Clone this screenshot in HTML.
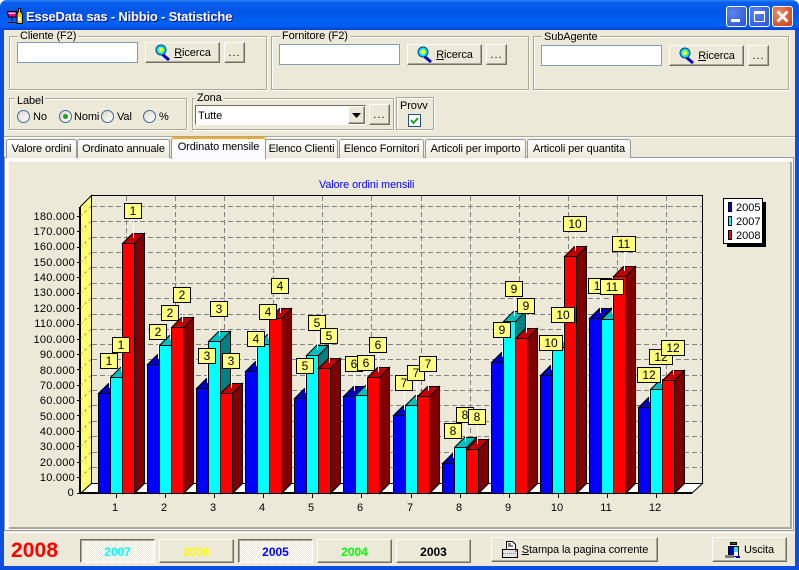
<!DOCTYPE html>
<html><head><meta charset="utf-8"><title>Statistiche</title>
<style>
html,body{margin:0;padding:0;background:#fff}
#w{position:relative;width:799px;height:570px;overflow:hidden;font:11px/14px "Liberation Sans",sans-serif;letter-spacing:-.1px;color:#000;background:#0a4fe0;border-radius:7px 7px 0 0}
#w div,#w span.a{position:absolute;box-sizing:border-box}
.tb{left:0;top:0;width:799px;height:30px;background:linear-gradient(180deg,#2b86f5 0,#0a5fee 8%,#0055e5 40%,#0062f5 80%,#0058ee 90%,#003dd0 100%)}
#w .tt{left:26px;top:9px;color:#fff;font:bold 13px/16px "Liberation Sans",sans-serif;letter-spacing:-.2px;text-shadow:1px 1px #0f1089;white-space:nowrap}
.cl{left:4px;top:30px;width:791px;height:536px;background:#ece9d8}
.gb{border:1px solid #aca899;box-shadow:1px 1px 0 #fff,inset 1px 1px 0 #fff}
.lg{background:#ece9d8;padding:0 2px;white-space:nowrap;line-height:12px}
.in{background:#fff;border:1px solid #7f9db9}
.bt{background:#ece9d8;border:1px solid;border-color:#fff #716f64 #716f64 #fff;box-shadow:inset -1px -1px 0 #aca899;text-align:center;white-space:nowrap}
.dt{letter-spacing:1px;line-height:20px}
.ri{padding-left:20px;line-height:20px}
.t{white-space:nowrap}
.rd{width:13px;height:13px;border-radius:50%;border:1px solid #3c6a94;background:linear-gradient(135deg,#dcd9cf,#fff)}
.tab{height:19px;top:139px;background:#ece9d8;border:1px solid #919b9c;border-bottom:0;border-radius:3px 3px 0 0;text-align:center;line-height:18px;white-space:nowrap;background:linear-gradient(#fff,#ece9d8)}
#w .yb{top:539px;width:75px;height:24px;font:bold 12px/25px "Liberation Sans",sans-serif;letter-spacing:0;text-align:center}
.ck{background:repeating-conic-gradient(#fff 0 25%,#ece9d8 0 50%) 0 0/2px 2px;border:1px solid;border-color:#716f64 #fff #fff #716f64;box-shadow:inset 1px 1px 0 #aca899}
svg{position:absolute;left:0;top:0}
svg text{font-family:"Liberation Sans",sans-serif;letter-spacing:0}
.lb rect{fill:#ffff80;stroke:#000}
.lb text{font-size:12px;text-anchor:middle}
.ya text{font-size:11px;text-anchor:end;letter-spacing:.25px}
.xa text{font-size:11px;text-anchor:middle}
</style></head><body>
<div id="w">
<div class="tb"></div>
<svg width="20" height="20" style="left:5px;top:7px" viewBox="0 0 20 20">
<path d="M2.500 4.500h9l-1 5.500h-7z" fill="#ff0080" stroke="#000"/><path d="M3.500 5.500h7v1.500h-7z" fill="#ffc0e0"/><path d="M7 10v4" stroke="#000"/><path d="M3 15.500h8" stroke="#000"/><path d="M3 16v2M11 16v2" stroke="#4040a0"/>
<path d="M13.500 1.500h2v3l2 2.500v9.500h-5.500V7l1.500-2.500z" fill="#e8d020" stroke="#000"/><path d="M13 10h3v4h-3z" fill="#fff8a0"/>
</svg>
<div class="tt">EsseData sas - Nibbio - Statistiche</div>
<!-- window buttons -->
<div style="left:726px;top:6px;width:21px;height:21px;border:1px solid #fff;border-radius:3px;background:radial-gradient(circle at 30% 30%,#5a85ea,#2a50d8)"></div>
<div style="left:731px;top:19px;width:9px;height:3px;background:#fff"></div>
<div style="left:749px;top:6px;width:21px;height:21px;border:1px solid #fff;border-radius:3px;background:radial-gradient(circle at 30% 30%,#5a85ea,#2a50d8)"></div>
<div style="left:754px;top:11px;width:11px;height:11px;border:1px solid #fff;border-top-width:3px"></div>
<div style="left:772px;top:6px;width:21px;height:21px;border:1px solid #fff;border-radius:3px;background:radial-gradient(circle at 30% 30%,#ec8a68,#cc3a14)"></div>
<svg width="21" height="21" style="left:772px;top:6px"><path d="M5.500 5.500l10 10M15.500 5.500l-10 10" stroke="#fff" stroke-width="2.800" fill="none"/></svg>
<div class="cl"></div>

<!-- group boxes -->
<div class="gb" style="left:9px;top:36px;width:258px;height:54px"></div>
<div class="lg t" style="left:18px;top:30px">Cliente (F2)</div>
<div class="in" style="left:17px;top:42px;width:121px;height:21px"></div>
<div class="bt ri" style="left:145px;top:42px;width:75px;height:21px"><u>R</u>icerca</div>
<svg width="18" height="18" style="left:154px;top:44px"><path d="M8 10l7 6" stroke="#0000c0" stroke-width="3"/><circle cx="7" cy="6" r="5" fill="#00e0ff" stroke="#004080"/><circle cx="7" cy="6" r="2.500" fill="#ffff00"/></svg>
<div class="bt dt" style="left:224px;top:42px;width:21px;height:21px">...</div>

<div class="gb" style="left:271px;top:36px;width:258px;height:54px"></div>
<div class="lg t" style="left:280px;top:30px">Fornitore (F2)</div>
<div class="in" style="left:279px;top:44px;width:121px;height:21px"></div>
<div class="bt ri" style="left:407px;top:44px;width:75px;height:21px"><u>R</u>icerca</div>
<svg width="18" height="18" style="left:416px;top:46px"><path d="M8 10l7 6" stroke="#0000c0" stroke-width="3"/><circle cx="7" cy="6" r="5" fill="#00e0ff" stroke="#004080"/><circle cx="7" cy="6" r="2.500" fill="#ffff00"/></svg>
<div class="bt dt" style="left:486px;top:44px;width:21px;height:21px">...</div>

<div class="gb" style="left:533px;top:36px;width:256px;height:54px"></div>
<div class="lg t" style="left:542px;top:31px">SubAgente</div>
<div class="in" style="left:541px;top:45px;width:121px;height:21px"></div>
<div class="bt ri" style="left:669px;top:45px;width:75px;height:21px"><u>R</u>icerca</div>
<svg width="18" height="18" style="left:678px;top:47px"><path d="M8 10l7 6" stroke="#0000c0" stroke-width="3"/><circle cx="7" cy="6" r="5" fill="#00e0ff" stroke="#004080"/><circle cx="7" cy="6" r="2.500" fill="#ffff00"/></svg>
<div class="bt dt" style="left:748px;top:45px;width:21px;height:21px">...</div>

<div class="gb" style="left:9px;top:98px;width:178px;height:32px"></div>
<div class="lg t" style="left:15px;top:95px">Label</div>
<div class="rd" style="left:17px;top:110px"></div><div class="t" style="left:33px;top:110px">No</div>
<div class="rd" style="left:59px;top:110px"></div><div style="left:63px;top:114px;width:5px;height:5px;border-radius:50%;background:#21a121"></div><div class="t" style="left:74px;top:110px">Nomi</div>
<div class="rd" style="left:101px;top:110px"></div><div class="t" style="left:117px;top:110px">Val</div>
<div class="rd" style="left:143px;top:110px"></div><div class="t" style="left:159px;top:110px">%</div>

<div class="gb" style="left:192px;top:98px;width:202px;height:32px"></div>
<div class="lg t" style="left:195px;top:92px">Zona</div>
<div style="left:195px;top:105px;width:171px;height:20px;background:#fff;border:1px solid #7f9db9;border-color:#716f64 #fff #fff #716f64;padding-left:2px;line-height:20px">Tutte</div>
<div class="bt" style="left:348px;top:106px;width:17px;height:18px"></div>
<svg width="10" height="6" style="left:352px;top:113px"><path d="M0 0h9L4.500 5z" fill="#000"/></svg>
<div class="bt dt" style="left:369px;top:104px;width:21px;height:21px">...</div>

<div class="gb" style="left:396px;top:97px;width:38px;height:33px"></div>
<div class="t" style="left:400px;top:99px">Provv</div>
<div style="left:408px;top:114px;width:13px;height:13px;background:#fff;border:1px solid #1c5180"></div>
<svg width="13" height="13" style="left:408px;top:114px"><path d="M3 6l2.500 3L10 4" stroke="#21a121" stroke-width="2" fill="none"/></svg>

<!-- separator -->
<div style="left:4px;top:136px;width:791px;height:1px;background:#aca899"></div>
<div style="left:4px;top:137px;width:791px;height:1px;background:#fff"></div>

<!-- tab pane -->
<div style="left:4px;top:157px;width:790px;height:374px;background:#fcfcfe;border:1px solid #919b9c"></div>
<div style="left:9px;top:162px;width:783px;height:367px;background:#ece9d8;border-right:2px solid #aca899;border-bottom:2px solid #aca899"></div>

<!-- tabs -->
<div class="tab" style="left:6px;width:71px">Valore ordini</div>
<div class="tab" style="left:77px;width:93px">Ordinato annuale</div>
<div class="tab" style="left:265px;width:73px">Elenco Clienti</div>
<div class="tab" style="left:339px;width:85px">Elenco Fornitori</div>
<div class="tab" style="left:425px;width:101px">Articoli per importo</div>
<div class="tab" style="left:527px;width:104px">Articoli per quantita</div>
<div class="tab" style="left:171px;top:137px;width:95px;height:22px;background:#fcfcfe;border:1px solid #919b9c;border-bottom:0;border-top:2px solid #ffa81c;line-height:16px">Ordinato mensile</div>

<!-- chart -->
<svg width="799" height="570" viewBox="0 0 799 570">
<path d="M80.500 206.500L91.500 195.500V483.500L80.500 493.500z" fill="#ffff70" stroke="#000"/>
<path d="M80 207V494" stroke="#000" stroke-width="2"/>
<path d="M91.500 195.500H702.500V483.500" fill="none" stroke="#000"/>
<path d="M80.500 493.500L91.500 483.500H702.500L691.500 493.500z" fill="#fff" stroke="#000"/>
<path d="M92 206.500H702M92 221.500H702M92 237.500H702M92 252.500H702M92 267.500H702M92 283.500H702M92 298.500H702M92 314.500H702M92 329.500H702M92 344.500H702M92 359.500H702M92 375.500H702M92 390.500H702M92 405.500H702M92 421.500H702M92 436.500H702M92 452.500H702M92 467.500H702M126.500 196V483M175.500 196V483M224.500 196V483M273.500 196V483M322.500 196V483M371.500 196V483M421.500 196V483M470.500 196V483M519.500 196V483M568.500 196V483M617.500 196V483M666.500 196V483" fill="none" stroke="#808080" stroke-dasharray="5 3"/>
<path d="M91 206.500l-11 10M91 221.500l-11 10M91 237.500l-11 10M91 252.500l-11 10M91 267.500l-11 10M91 283.500l-11 10M91 298.500l-11 10M91 314.500l-11 10M91 329.500l-11 10M91 344.500l-11 10M91 359.500l-11 10M91 375.500l-11 10M91 390.500l-11 10M91 405.500l-11 10M91 421.500l-11 10M91 436.500l-11 10M91 452.500l-11 10M91 467.500l-11 10" fill="none" stroke="#a0a060" stroke-dasharray="3 3"/>
<path d="M77 216.500h4M77 231.500h4M77 247.500h4M77 262.500h4M77 277.500h4M77 293.500h4M77 308.500h4M77 324.500h4M77 339.500h4M77 354.500h4M77 369.500h4M77 385.500h4M77 400.500h4M77 415.500h4M77 431.500h4M77 446.500h4M77 462.500h4M77 477.500h4M77 493.500h4M116.500 494v4M165.500 494v4M214.500 494v4M263.500 494v4M312.500 494v4M361.500 494v4M411.500 494v4M460.500 494v4M509.500 494v4M558.500 494v4M607.500 494v4M656.500 494v4" stroke="#000" fill="none"/>
<rect x="80" y="492" width="612" height="2" fill="#000"/>

<g stroke="#000">
<path fill="#0000ff" d="M98.500 393.500h12V493.500h-12zM147.500 364.500h12V493.500h-12zM196.500 388.500h12V493.500h-12zM245.500 371.500h12V493.500h-12zM294.500 398.500h12V493.500h-12zM343.500 396.500h12V493.500h-12zM393.500 415.500h12V493.500h-12zM442.500 463.500h12V493.500h-12zM491.500 362.500h12V493.500h-12zM540.500 375.500h12V493.500h-12zM589.500 318.500h12V493.500h-12zM638.500 407.500h12V493.500h-12z"/>
<path fill="#0000c0" d="M98.500 393.500l10-10h12l-10 10zM147.500 364.500l10-10h12l-10 10zM196.500 388.500l10-10h12l-10 10zM245.500 371.500l10-10h12l-10 10zM294.500 398.500l10-10h12l-10 10zM343.500 396.500l10-10h12l-10 10zM393.500 415.500l10-10h12l-10 10zM442.500 463.500l10-10h12l-10 10zM491.500 362.500l10-10h12l-10 10zM540.500 375.500l10-10h12l-10 10zM589.500 318.500l10-10h12l-10 10zM638.500 407.500l10-10h12l-10 10z"/>
<path fill="#000080" d="M110.500 393.500l10-10V483.500l-10 10zM159.500 364.500l10-10V483.500l-10 10zM208.500 388.500l10-10V483.500l-10 10zM257.500 371.500l10-10V483.500l-10 10zM306.500 398.500l10-10V483.500l-10 10zM355.500 396.500l10-10V483.500l-10 10zM405.500 415.500l10-10V483.500l-10 10zM454.500 463.500l10-10V483.500l-10 10zM503.500 362.500l10-10V483.500l-10 10zM552.500 375.500l10-10V483.500l-10 10zM601.500 318.500l10-10V483.500l-10 10zM650.500 407.500l10-10V483.500l-10 10z"/>

<path fill="#00ffff" d="M110.500 377.500h12V493.500h-12zM159.500 345.500h12V493.500h-12zM208.500 341.500h12V493.500h-12zM257.500 344.500h12V493.500h-12zM306.500 355.500h12V493.500h-12zM355.500 395.500h12V493.500h-12zM405.500 405.500h12V493.500h-12zM454.500 447.500h12V493.500h-12zM503.500 321.500h12V493.500h-12zM552.500 347.500h12V493.500h-12zM601.500 319.500h12V493.500h-12zM650.500 389.500h12V493.500h-12z"/>
<path fill="#00c0c0" d="M110.500 377.500l10-10h12l-10 10zM159.500 345.500l10-10h12l-10 10zM208.500 341.500l10-10h12l-10 10zM257.500 344.500l10-10h12l-10 10zM306.500 355.500l10-10h12l-10 10zM355.500 395.500l10-10h12l-10 10zM405.500 405.500l10-10h12l-10 10zM454.500 447.500l10-10h12l-10 10zM503.500 321.500l10-10h12l-10 10zM552.500 347.500l10-10h12l-10 10zM601.500 319.500l10-10h12l-10 10zM650.500 389.500l10-10h12l-10 10z"/>
<path fill="#008080" d="M122.500 377.500l10-10V483.500l-10 10zM171.500 345.500l10-10V483.500l-10 10zM220.500 341.500l10-10V483.500l-10 10zM269.500 344.500l10-10V483.500l-10 10zM318.500 355.500l10-10V483.500l-10 10zM367.500 395.500l10-10V483.500l-10 10zM417.500 405.500l10-10V483.500l-10 10zM466.500 447.500l10-10V483.500l-10 10zM515.500 321.500l10-10V483.500l-10 10zM564.500 347.500l10-10V483.500l-10 10zM613.500 319.500l10-10V483.500l-10 10zM662.500 389.500l10-10V483.500l-10 10z"/>

<path fill="#ff0000" d="M122.500 243.500h12V493.500h-12zM171.500 327.500h12V493.500h-12zM220.500 393.500h12V493.500h-12zM269.500 318.500h12V493.500h-12zM318.500 368.500h12V493.500h-12zM367.500 377.500h12V493.500h-12zM417.500 396.500h12V493.500h-12zM466.500 449.500h12V493.500h-12zM515.500 338.500h12V493.500h-12zM564.500 256.500h12V493.500h-12zM613.500 276.500h12V493.500h-12zM662.500 380.500h12V493.500h-12z"/>
<path fill="#c00000" d="M122.500 243.500l10-10h12l-10 10zM171.500 327.500l10-10h12l-10 10zM220.500 393.500l10-10h12l-10 10zM269.500 318.500l10-10h12l-10 10zM318.500 368.500l10-10h12l-10 10zM367.500 377.500l10-10h12l-10 10zM417.500 396.500l10-10h12l-10 10zM466.500 449.500l10-10h12l-10 10zM515.500 338.500l10-10h12l-10 10zM564.500 256.500l10-10h12l-10 10zM613.500 276.500l10-10h12l-10 10zM662.500 380.500l10-10h12l-10 10z"/>
<path fill="#800000" d="M134.500 243.500l10-10V483.500l-10 10zM183.500 327.500l10-10V483.500l-10 10zM232.500 393.500l10-10V483.500l-10 10zM281.500 318.500l10-10V483.500l-10 10zM330.500 368.500l10-10V483.500l-10 10zM379.500 377.500l10-10V483.500l-10 10zM429.500 396.500l10-10V483.500l-10 10zM478.500 449.500l10-10V483.500l-10 10zM527.500 338.500l10-10V483.500l-10 10zM576.500 256.500l10-10V483.500l-10 10zM625.500 276.500l10-10V483.500l-10 10zM674.500 380.500l10-10V483.500l-10 10z"/>
</g>

<path stroke="#fff" fill="none" d="M109.500 369V388M121.500 353V372M133.500 219V238M158.500 340V359M170.500 321V340M182.500 303V322M207.500 364V383M219.500 317V336M231.500 369V388M256.500 347V366M268.500 320V339M280.500 294V313M305.500 374V393M317.500 331V350M329.500 344V363M354.500 372V391M366.500 371V390M378.500 353V372M404.500 391V410M416.500 381V400M428.500 372V391M453.500 439V458M465.500 423V442M477.500 425V444M502.500 338V357M514.500 297V316M526.500 314V333M551.500 351V370M563.500 323V342M575.500 232V251M600.500 294V313M612.500 295V314M624.500 252V271M649.500 383V402M661.500 365V384M673.500 356V375"/>

<g class="lb">
<rect x="100.500" y="353.500" width="17" height="15"/><text x="109" y="365">1</text>
<rect x="112.500" y="337.500" width="17" height="15"/><text x="121" y="349">1</text>
<rect x="124.500" y="203.500" width="17" height="15"/><text x="133" y="215">1</text>
<rect x="149.500" y="324.500" width="17" height="15"/><text x="158" y="336">2</text>
<rect x="161.500" y="305.500" width="17" height="15"/><text x="170" y="317">2</text>
<rect x="173.500" y="287.500" width="17" height="15"/><text x="182" y="299">2</text>
<rect x="198.500" y="348.500" width="17" height="15"/><text x="207" y="360">3</text>
<rect x="210.500" y="301.500" width="17" height="15"/><text x="219" y="313">3</text>
<rect x="222.500" y="353.500" width="17" height="15"/><text x="231" y="365">3</text>
<rect x="247.500" y="331.500" width="17" height="15"/><text x="256" y="343">4</text>
<rect x="259.500" y="304.500" width="17" height="15"/><text x="268" y="316">4</text>
<rect x="271.500" y="278.500" width="17" height="15"/><text x="280" y="290">4</text>
<rect x="296.500" y="358.500" width="17" height="15"/><text x="305" y="370">5</text>
<rect x="308.500" y="315.500" width="17" height="15"/><text x="317" y="327">5</text>
<rect x="320.500" y="328.500" width="17" height="15"/><text x="329" y="340">5</text>
<rect x="345.500" y="356.500" width="17" height="15"/><text x="354" y="368">6</text>
<rect x="357.500" y="355.500" width="17" height="15"/><text x="366" y="367">6</text>
<rect x="369.500" y="337.500" width="17" height="15"/><text x="378" y="349">6</text>
<rect x="395.500" y="375.500" width="17" height="15"/><text x="404" y="387">7</text>
<rect x="407.500" y="365.500" width="17" height="15"/><text x="416" y="377">7</text>
<rect x="419.500" y="356.500" width="17" height="15"/><text x="428" y="368">7</text>
<rect x="444.500" y="423.500" width="17" height="15"/><text x="453" y="435">8</text>
<rect x="456.500" y="407.500" width="17" height="15"/><text x="465" y="419">8</text>
<rect x="468.500" y="409.500" width="17" height="15"/><text x="477" y="421">8</text>
<rect x="493.500" y="322.500" width="17" height="15"/><text x="502" y="334">9</text>
<rect x="505.500" y="281.500" width="17" height="15"/><text x="514" y="293">9</text>
<rect x="517.500" y="298.500" width="17" height="15"/><text x="526" y="310">9</text>
<rect x="539.500" y="335.500" width="23" height="15"/><text x="551" y="347">10</text>
<rect x="551.500" y="307.500" width="23" height="15"/><text x="563" y="319">10</text>
<rect x="563.500" y="216.500" width="23" height="15"/><text x="575" y="228">10</text>
<rect x="588.500" y="278.500" width="23" height="15"/><text x="600" y="290">11</text>
<rect x="600.500" y="279.500" width="23" height="15"/><text x="612" y="291">11</text>
<rect x="612.500" y="236.500" width="23" height="15"/><text x="624" y="248">11</text>
<rect x="637.500" y="367.500" width="23" height="15"/><text x="649" y="379">12</text>
<rect x="649.500" y="349.500" width="23" height="15"/><text x="661" y="361">12</text>
<rect x="661.500" y="340.500" width="23" height="15"/><text x="673" y="352">12</text>
</g>

<g class="ya">
<text x="75" y="220">180.000</text><text x="75" y="235">170.000</text><text x="75" y="250">160.000</text><text x="75" y="266">150.000</text><text x="75" y="281">140.000</text><text x="75" y="296">130.000</text><text x="75" y="312">120.000</text><text x="75" y="327">110.000</text><text x="75" y="343">100.000</text><text x="75" y="358">90.000</text><text x="75" y="374">80.000</text><text x="75" y="389">70.000</text><text x="75" y="404">60.000</text><text x="75" y="420">50.000</text><text x="75" y="435">40.000</text><text x="75" y="450">30.000</text><text x="75" y="466">20.000</text><text x="75" y="481">10.000</text><text x="74" y="496">0</text>
</g>
<g class="xa">
<text x="115" y="511">1</text><text x="164" y="511">2</text><text x="213" y="511">3</text><text x="262" y="511">4</text><text x="311" y="511">5</text><text x="360" y="511">6</text><text x="410" y="511">7</text><text x="459" y="511">8</text><text x="508" y="511">9</text><text x="557" y="511">10</text><text x="606" y="511">11</text><text x="655" y="511">12</text>
</g>
<text x="319" y="188" font-size="10.700" fill="#0000ff">Valore ordini mensili</text>

<rect x="727" y="202" width="39" height="45" fill="#000"/>
<rect x="723.500" y="198.500" width="39" height="45" fill="#fff" stroke="#000"/>
<rect x="728.500" y="202.500" width="3" height="9" fill="#0000ff" stroke="#000"/>
<rect x="728.500" y="216.500" width="3" height="9" fill="#00ffff" stroke="#000"/>
<rect x="728.500" y="230.500" width="3" height="9" fill="#ff0000" stroke="#000"/>
<text x="736" y="211" font-size="11">2005</text>
<text x="736" y="225" font-size="11">2007</text>
<text x="736" y="239" font-size="11">2008</text>
</svg>

<!-- bottom bar -->
<div style="left:4px;top:532px;width:791px;height:1px;background:#fff"></div>
<div class="t" style="left:11px;top:538px;font:bold 21px/26px 'Liberation Sans',sans-serif;letter-spacing:.1px;color:#ff0000">2008</div>
<div class="yb ck" style="left:80px;color:#00ffff">2007</div>
<div class="yb bt" style="left:159px;color:#ffff00">2006</div>
<div class="yb ck" style="left:238px;color:#0000ff">2005</div>
<div class="yb bt" style="left:317px;color:#00ff00">2004</div>
<div class="yb bt" style="left:396px;color:#000">2003</div>
<div class="bt" style="left:491px;top:537px;width:167px;height:25px;line-height:24px;padding-left:21px"><u>S</u>tampa la pagina corrente</div>
<svg width="18" height="18" style="left:501px;top:541px"><path d="M5.500 .5h6l3 3v5h-9z" fill="#fff" stroke="#000"/><path d="M1.500 8.500h15v8h-15z" fill="#e4e4e4" stroke="#000"/><path d="M2 12.500h14" stroke="#808080" stroke-dasharray="1 1"/><path d="M7 3h3M7 5h5" stroke="#000"/><path d="M14 10h2" stroke="#d00000"/></svg>
<div class="bt" style="left:712px;top:537px;width:75px;height:25px;line-height:24px;padding-left:19px">Uscita</div>
<svg width="18" height="20" style="left:724px;top:540px"><path d="M6.500 2.500h6v2h-6z" fill="#008000" stroke="#000"/><path d="M4.500 6.500h10v10h-10z" fill="#fff" stroke="#000"/><path d="M5 7h5v10H5z" fill="#0000c0"/><path d="M10 7h4v5h-4z" fill="#40e0e0"/><path d="M1 15h9v3H1z" fill="#808080"/><path d="M12 17h4" stroke="#0000c0" stroke-width="2"/></svg>
</div>
</body></html>
